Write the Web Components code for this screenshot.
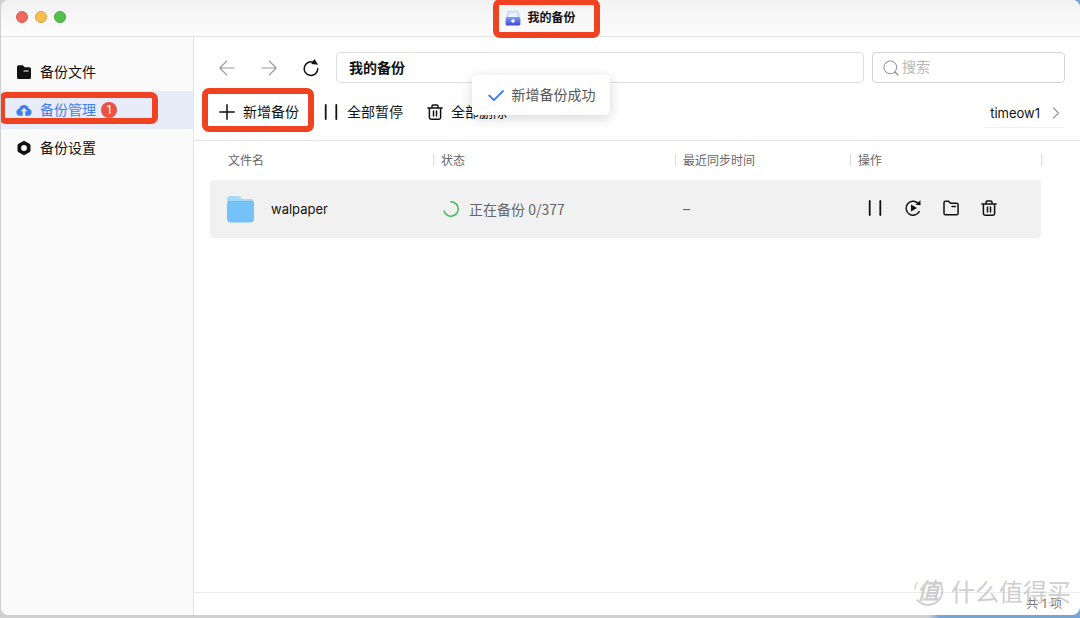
<!DOCTYPE html>
<html lang="zh-CN">
<head>
<meta charset="utf-8">
<meta name="viewport" content="width=device-width, initial-scale=1">
<title>我的备份</title>
<style>
html { height: 100%; }
body {
  margin: 0; min-height: 100%; box-sizing: border-box; padding: 0 0 3px 1px;
  display: flex; flex-direction: column;
  font: 14px/20px Inter, "Noto Sans CJK SC", sans-serif; color: #111;
  background: linear-gradient(90deg, #cfcfcf 0 86%, #76a5d3 87%);
}
</style>
</head>
<body>
<backup-app></backup-app>
<script>
const define = (name, html, setup) => {
  const tpl = document.createElement('template');
  tpl.innerHTML = html;
  customElements.define(name, class extends HTMLElement {
    constructor() {
      super();
      this.attachShadow({ mode: 'open' }).append(tpl.content.cloneNode(true));
    }
    connectedCallback() { if (setup) setup.call(this, this.shadowRoot); }
  });
};

const line = (d, w = 1.4) => `<path d="${d}" fill="none" stroke="currentColor" stroke-width="${w}" stroke-linecap="round" stroke-linejoin="round"/>`;
const ICONS = {
  back: line('M15.3 8H.8M7.8 1L.8 8l7 7', 1.1),
  forward: line('M.7 8h14.5M8.2 1l7 7-7 7', 1.1),
  reload: line('M14.8 8.8A6.8 6.8 0 1 1 10.7 2.4', 1.5) + '<path d="M11.400-1l3.800 5.800-7-.8z" fill="currentColor"/>',
  plus: line('M8 .8v14.4M.8 8h14.4', 1.5),
  pause: line('M2.7 1v14M13.3 1v14', 1.8),
  trash: line('M.9 4h14.2M2.4 4v9.6q0 1.7 1.7 1.7h7.8q1.7 0 1.700-1.700V4M5 4V2.300Q5 1 6.300 1h3.400Q11 1 11 2.300V4M6.500 7v5M9.500 7v5', 1.5),
  resume: line('M14.200 11.600A7 7 0 1 1 12.700 2.900', 1.5) + '<path d="M10.400 4.800L15.500.2v5zM6 4.500v7L12 8z" fill="currentColor"/>',
  folder: line('M1 2.700Q1 1.200 2.500 1.200h3l2 2h6q1.600 0 1.600 1.600v8.400q0 1.600-1.600 1.600h-11Q1 14.800 1 13.200zM9 6.600h3.500', 1.5),
  files: '<path d="M1 2.700Q1 1.200 2.500 1.200h4.300l2 2.100h4.700Q15 3.300 15 4.800v8.600q0 1.600-1.600 1.600H2.600Q1 15 1 13.400z" fill="currentColor"/><path d="M7.500 7h5.200" stroke="#fff" stroke-width="1.200"/>',
  cloud: '<path d="M3.800 13.800A3.600 3.600 0 0 1 3.200 6.700a5 5 0 0 1 9.600 0 3.600 3.600 0 0 1-.6 7.100H9.300V9.300h2L8 5.700 4.700 9.300h2v4.500z" fill="currentColor"/>',
  settings: '<path fill-rule="evenodd" d="M7 1.200q1-.6 2 0l4.500 2.600q1 .6 1 1.700v5q0 1.100-1 1.700L9 14.800q-1 .6-2 0l-4.500-2.600q-1-.6-1-1.700v-5q0-1.100 1-1.700zM8 5.100a2.900 2.900 0 1 0 0 5.800 2.900 2.900 0 0 0 0-5.800z" fill="currentColor"/>',
  search: '<circle cx="7.300" cy="7.300" r="6.400" fill="none" stroke="currentColor"/>' + line('M12 12l3 3', 1.2),
  chevron: line('M5.500 3L10.500 8l-5 5', 1.2),
  check: line('M1.200 8.500l4.700 4.600L15 4', 1.8),
  spinner: line('M8 .8A7.200 7.200 0 1 1 1.100 10', 1.5),
  app: '<defs><linearGradient id="g" x2="0" y2="1"><stop stop-color="#7da0f4"/><stop offset="1" stop-color="#4648cf"/></linearGradient></defs><path d="M1.800 2Q2 .5 3.500.5h9q1.500 0 1.700 1.500L15 8H1z" fill="#cfddf6"/><path d="M4 3h8v4H4z" fill="#eef3fc"/><rect x=".6" y="7" width="14.800" height="8.400" rx="1.500" fill="url(#g)"/><path d="M8 9v4M6 11h4" stroke="#fff" stroke-width="1.300"/>',
  bigfolder: '<path d="M1 5Q1 1 4.500 1H12q1.500 0 2.500 1.200L16 4h8.500Q28 4 28 8v6H1z" fill="#a5d9fa"/><path d="M1 9.500Q1 6 4.500 6h20Q28 6 28 9.500v14q0 4-4 4H5q-4 0-4-4z" fill="#74c2f7"/><path d="M2 6.500h25" stroke="#70b6e4" stroke-width=".8"/>',
  arc: '<path d="M14 3.200A7.400 7.400 0 0 1 2.200 12.600" fill="none" stroke="currentColor" stroke-width="1"/><path d="M2.400 3.200A7.400 7.400 0 0 0 .8 7" fill="none" stroke="currentColor" stroke-width=".6"/>'
};

define('ui-icon', `
<style>
  :host { display: block; flex: none; width: var(--size, 16px); height: var(--size, 16px); }
  svg { display: block; width: 100%; height: 100%; overflow: visible; }
</style><svg aria-hidden="true"></svg>`, function (root) {
  const svg = root.querySelector('svg');
  const name = this.getAttribute('name');
  svg.setAttribute('viewBox', name === 'bigfolder' ? '0 0 29 29' : '0 0 16 16');
  svg.innerHTML = ICONS[name];
});

define('focus-frame', `
<style>
  :host { position: absolute; box-sizing: border-box; border: 6px solid #ee4220; border-radius: 7px; pointer-events: none; z-index: 3; }
</style>`);

define('title-bar', `
<style>
  :host { display: flex; align-items: center; justify-content: center; position: relative; height: 36px; border-bottom: 1px solid #e2e2e2; background: linear-gradient(#f2f2f2, #fcfcfc); }
  .lights { position: absolute; left: 15px; top: 11px; display: flex; gap: 7px; }
  .lights button { width: 12px; height: 12px; padding: 0; border: 1px solid #d9564b; border-radius: 50%; background: #ee6a5e; }
  .lights button:nth-child(2) { background: #f5be4f; border-color: #dca43a; }
  .lights button:nth-child(3) { background: #55c14b; border-color: #43a83a; }
  h1 { display: flex; align-items: center; gap: 6px; position: relative; margin: 0; font-size: 12px; line-height: 20px; font-weight: 700; }
  focus-frame { inset: -9px -24px -10px -12px; }
</style>
<div class="lights"><button aria-label="关闭"></button><button aria-label="最小化"></button><button aria-label="缩放"></button></div>
<h1><ui-icon name="app"></ui-icon><slot></slot><focus-frame></focus-frame></h1>`);

define('side-item', `
<style>
  :host { display: block; position: relative; }
  a { display: flex; align-items: center; gap: 8px; height: 38px; padding-left: 15px; color: inherit; text-decoration: none; }
  :host([active]) a { background: #e7ecf8; color: #3f7ff0; }
  focus-frame { display: none; inset: 1px 35px 5px -2px; }
  :host([active]) focus-frame { display: block; }
</style>
<a href="#"><ui-icon></ui-icon><slot></slot></a><focus-frame></focus-frame>`, function (root) {
  const old = root.querySelector('ui-icon');
  const icon = document.createElement('ui-icon');
  icon.setAttribute('name', this.getAttribute('icon'));
  old.replaceWith(icon);
});

define('side-bar', `
<style>
  :host { display: block; flex: none; box-sizing: border-box; width: 193px; padding-top: 16px; border-right: 1px solid #e3e3e3; background: #fafafa; }
  .badge { width: 16px; height: 16px; margin-left: -3px; border-radius: 50%; background: #ec5145; color: #fff; font-size: 12px; line-height: 16px; text-align: center; }
</style>
<nav>
  <side-item icon="files">备份文件</side-item>
  <side-item icon="cloud" active>备份管理<span class="badge">1</span></side-item>
  <side-item icon="settings">备份设置</side-item>
</nav>`);

define('nav-bar', `
<style>
  :host { display: flex; align-items: center; gap: 8px; padding: 15px 15px 0 25px; }
  .history { display: flex; gap: 26px; margin-right: 9px; }
  button { padding: 0; border: 0; background: none; color: #9c9c9c; }
  button:last-child { color: #111; }
  input { box-sizing: border-box; height: 31px; border: 1px solid #e0e0e0; border-radius: 4px; background: #fff; font: inherit; color: #111; outline: none; }
  .path { flex: 1; min-width: 0; padding: 0 12px 2px; font-weight: 700; }
  .search { display: flex; position: relative; width: 193px; }
  .search input { width: 100%; padding: 0 8px 2px 29px; border-color: #d4d4d4; }
  .search input::placeholder { color: #b8b8b8; opacity: 1; }
  .search ui-icon { position: absolute; left: 11px; top: 8px; color: #8c8c8c; }
</style>
<div class="history">
  <button aria-label="后退"><ui-icon name="back"></ui-icon></button>
  <button aria-label="前进"><ui-icon name="forward"></ui-icon></button>
  <button aria-label="刷新"><ui-icon name="reload"></ui-icon></button>
</div>
<input class="path" aria-label="路径" value="我的备份">
<label class="search"><ui-icon name="search"></ui-icon><input type="search" aria-label="搜索" placeholder="搜索"></label>`);

define('tool-bar', `
<style>
  :host { display: flex; align-items: center; gap: 24px; height: 57px; padding: 0 16px 0 25px; border-bottom: 1px solid #e3e3e3; }
  button { display: flex; align-items: center; gap: 8px; position: relative; padding: 0; border: 0; background: none; font: inherit; color: inherit; }
  focus-frame { inset: -14px -15px -10px -17px; }
  .device { margin-left: auto; height: 32px; padding: 4px 1px 0 6px; border-bottom: 1px solid #f2f2f2; font-size: 13px; }
  .device ui-icon { color: #999; margin-right: -1px; }
</style>
<button><ui-icon name="plus"></ui-icon>新增备份<focus-frame></focus-frame></button>
<button><ui-icon name="pause"></ui-icon>全部暂停</button>
<button><ui-icon name="trash"></ui-icon>全部删除</button>
<button class="device">timeow1<ui-icon name="chevron"></ui-icon></button>`);

define('backup-table', `
<style>
  :host { display: block; flex: 1; padding: 0 39px 0 16px; }
  table { width: 100%; table-layout: fixed; border-collapse: separate; border-spacing: 0; }
  .status-col { width: 242px; } .time-col { width: 175px; } .action-col { width: 191px; }
  th { height: 39px; padding: 0 0 0 8px; font-size: 12px; line-height: 12px; font-weight: 400; text-align: left; color: #666; position: relative; }
  th:first-child { padding-left: 18px; }
  th:not(:first-child)::before, th:last-child::after { content: ""; position: absolute; left: 0; top: 13px; width: 1px; height: 12px; background: #dcdcdc; }
  th:last-child::after { left: 100%; }
  td { height: 56px; padding: 0 0 0 8px; background: #f1f1f1; color: #666; }
  td:first-child { padding-left: 16px; border-radius: 4px 0 0 4px; color: #111; }
  td:nth-child(2) { padding-left: 10px; }
  td:last-child { padding: 0 0 2px 17px; border-radius: 0 4px 4px 0; color: #111; }
  .cell { display: flex; align-items: center; gap: 16px; font-size: 13px; }
  .cell ui-icon { --size: 29px; }
  .status { gap: 10px; font: 14px/20px "Noto Sans CJK SC", sans-serif; }
  .status ui-icon { --size: 16px; color: #46b955; }
  .actions { display: flex; gap: 22px; }
  button { padding: 0; border: 0; background: none; color: inherit; }
</style>
<table>
  <colgroup><col><col class="status-col"><col class="time-col"><col class="action-col"></colgroup>
  <thead><tr><th>文件名</th><th>状态</th><th>最近同步时间</th><th>操作</th></tr></thead>
  <tbody><tr>
    <td><div class="cell"><ui-icon name="bigfolder"></ui-icon>walpaper</div></td>
    <td><div class="cell status"><ui-icon name="spinner"></ui-icon>正在备份 0/377</div></td>
    <td>–</td>
    <td><div class="actions">
      <button aria-label="暂停"><ui-icon name="pause"></ui-icon></button>
      <button aria-label="立即同步"><ui-icon name="resume"></ui-icon></button>
      <button aria-label="打开文件夹"><ui-icon name="folder"></ui-icon></button>
      <button aria-label="删除"><ui-icon name="trash"></ui-icon></button>
    </div></td>
  </tr></tbody>
</table>`);

define('toast-message', `
<style>
  :host { position: absolute; z-index: 2; left: 0; right: 0; top: 75px; display: flex; justify-content: center; pointer-events: none; }
  div { display: flex; align-items: center; gap: 8px; height: 40px; padding: 0 14px 0 16px; border-radius: 4px; background: #fff; color: #555; box-shadow: 0 3px 14px rgba(0,0,0,.16); }
  ui-icon { color: #3c7cf5; }
</style>
<div role="status"><ui-icon name="check"></ui-icon><slot></slot></div>`);

define('status-footer', `
<style>
  :host { display: block; height: 22px; padding-right: 18px; border-top: 1px solid #ececec; font-size: 12px; line-height: 22px; text-align: right; color: #777; }
</style><slot></slot>`);

define('site-watermark', `
<style>
  :host { position: absolute; z-index: 4; right: 9px; bottom: 8px; display: flex; align-items: center; gap: 8px; font: 24px/32px "Noto Sans CJK SC", sans-serif; color: #c6c6c6; opacity: .85; pointer-events: none; }
  .logo { position: relative; width: 30px; height: 30px; font-size: 22px; line-height: 26px; font-style: italic; font-weight: 700; text-align: center; }
  .logo ui-icon { --size: 30px; position: absolute; inset: 0; }
</style>
<span class="logo"><ui-icon name="arc"></ui-icon>值</span><span>什么值得买</span>`);

define('backup-app', `
<style>
  :host { flex: 1; display: flex; flex-direction: column; position: relative; overflow: hidden; border-radius: 8px; background: #fff; }
  .body { flex: 1; display: flex; }
  main { flex: 1; min-width: 0; display: flex; flex-direction: column; }
</style>
<title-bar>我的备份</title-bar>
<div class="body">
  <side-bar></side-bar>
  <main>
    <nav-bar></nav-bar>
    <tool-bar></tool-bar>
    <backup-table></backup-table>
    <status-footer>共 1 项</status-footer>
  </main>
</div>
<toast-message>新增备份成功</toast-message>
<site-watermark></site-watermark>`);
</script>
</body>
</html>
